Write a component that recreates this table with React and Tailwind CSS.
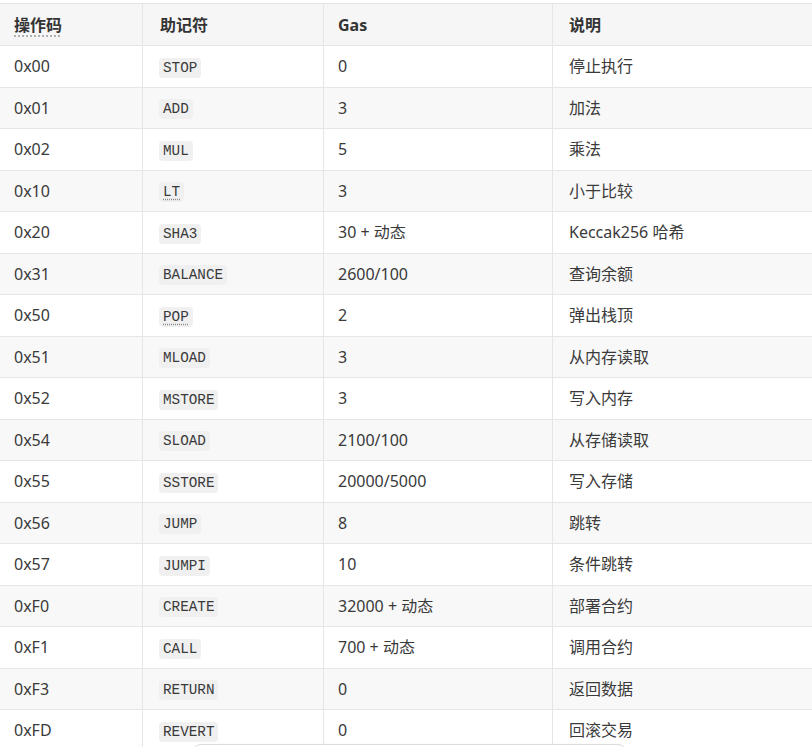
const rows = [
  ["0x00", "STOP", "0", "停止执行"],
  ["0x01", "ADD", "3", "加法"],
  ["0x02", "MUL", "5", "乘法"],
  ["0x10", "LT", "3", "小于比较", true],
  ["0x20", "SHA3", "30 + 动态", "Keccak256 哈希"],
  ["0x31", "BALANCE", "2600/100", "查询余额"],
  ["0x50", "POP", "2", "弹出栈顶", true],
  ["0x51", "MLOAD", "3", "从内存读取"],
  ["0x52", "MSTORE", "3", "写入内存"],
  ["0x54", "SLOAD", "2100/100", "从存储读取"],
  ["0x55", "SSTORE", "20000/5000", "写入存储"],
  ["0x56", "JUMP", "8", "跳转"],
  ["0x57", "JUMPI", "10", "条件跳转"],
  ["0xF0", "CREATE", "32000 + 动态", "部署合约"],
  ["0xF1", "CALL", "700 + 动态", "调用合约"],
  ["0xF3", "RETURN", "0", "返回数据"],
  ["0xFD", "REVERT", "0", "回滚交易"],
];

export default function App() {
  return (
    <div
      className="relative h-[747px] w-[812px] overflow-hidden bg-white text-[16px] text-[#3a3a3a]"
      style={{ fontFamily: '"Noto Sans", "Noto Sans CJK SC", sans-serif' }}
    >
      <div className="mt-[3px] w-[900px]">
        <div className="flex h-[42px] items-center border-t border-[#e6e6e6] bg-[#f6f6f6] font-bold text-[#333333]">
          <div className="flex h-full w-[142px] items-center pl-[14px]">
            <span className="underline decoration-dotted decoration-[#a0a0a0] underline-offset-[5px]">操作码</span>
          </div>
          <div className="flex h-full w-[181px] items-center border-l border-[#e6e6e6] pl-[17px]">助记符</div>
          <div className="flex h-full w-[229px] items-center border-l border-[#e6e6e6] pl-[14px]">Gas</div>
          <div className="flex h-full flex-1 items-center border-l border-[#e6e6e6] pl-[16px]">说明</div>
        </div>
        {rows.map((r, i) => (
          <div
            key={r[0]}
            className={`flex h-[41.5px] items-center border-t border-[#e6e6e6] ${i % 2 === 1 ? "bg-[#f8f8f8]" : "bg-white"}`}
          >
            <div className="flex h-full w-[142px] items-center pl-[14px]">{r[0]}</div>
            <div className="flex h-full w-[181px] items-center border-l border-[#e6e6e6] pl-[16px] pt-[3px]">
              <code
                className={`inline-flex h-[20px] items-center rounded-[4px] bg-[#f0f0f0] px-[4px] text-[14.3px] leading-none text-[#3a3a3a] ${r[4] ? "underline decoration-dotted decoration-[#888] underline-offset-[3px]" : ""}`}
                style={{ fontFamily: '"Liberation Mono", "DejaVu Sans Mono", monospace' }}
              >
                {r[1]}
              </code>
            </div>
            <div className="flex h-full w-[229px] items-center border-l border-[#e6e6e6] pl-[14px]">{r[2]}</div>
            <div className="flex h-full flex-1 items-center border-l border-[#e6e6e6] pl-[16px]">{r[3]}</div>
          </div>
        ))}
      </div>
      <div className="absolute left-[193px] top-[744px] h-[40px] w-[433px] rounded-[8px] border border-[#dcdcdc] bg-white shadow-sm"></div>
    </div>
  );
}
